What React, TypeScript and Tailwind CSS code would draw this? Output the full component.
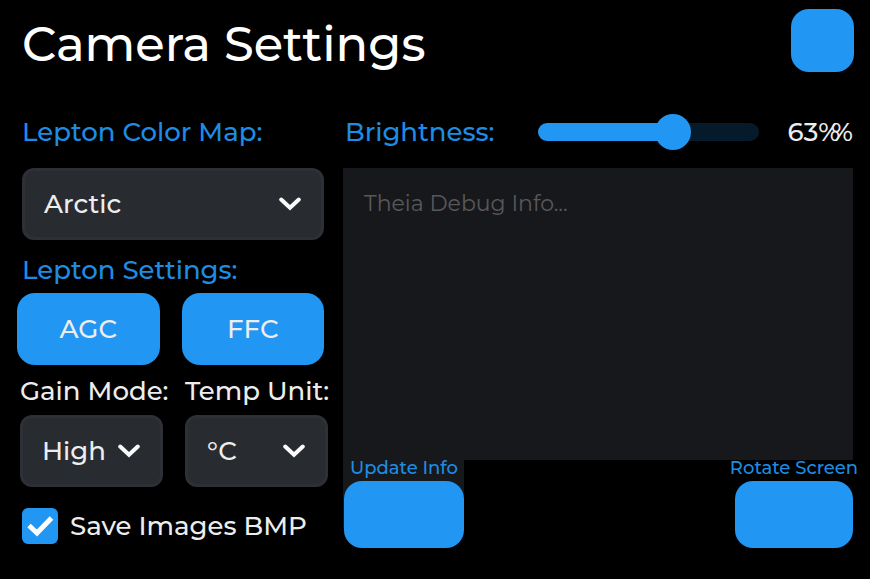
import { useState } from 'react';
import type { CSSProperties } from 'react';

type DropdownProps = { id: string; options: string[]; label?: string };

function Dropdown({ id, options, label }: DropdownProps) {
  return (
    <div className="relative">
      <select
        id={id}
        aria-label={label}
        className="block h-[72px] w-full appearance-none rounded-xl border-[3px] border-[#2d3035] bg-[#282b30] pr-12 pl-[19px] text-[26px] text-[#ededed] outline-none"
      >
        {options.map((option) => (
          <option key={option}>{option}</option>
        ))}
      </select>
      <svg
        viewBox="0 0 22 14"
        className="pointer-events-none absolute top-[29px] right-[23px] h-[14px] w-[22px]"
        fill="none"
        stroke="#fafafa"
        strokeWidth="4"
        strokeLinecap="round"
        strokeLinejoin="miter"
      >
        <path d="M2.2 2.5 11 10.8l8.8-8.3" />
      </svg>
    </div>
  );
}

export default function App() {
  const [brightness, setBrightness] = useState(63);
  const [saveBmp, setSaveBmp] = useState(true);
  const ratio = brightness / 100;
  const fill = { '--fill': `calc(18px + (100% - 36px) * ${ratio})` } as CSSProperties;

  return (
    <div className="min-h-screen bg-black pb-8 font-[Montserrat,Inter,sans-serif] text-[26px] leading-7 font-medium text-[#ededed]">
      <header className="flex items-start justify-between pt-[9px] pr-4 pl-[22px]">
        <h1 className="text-5xl leading-[70px] font-medium text-white">Camera Settings</h1>
        <button type="button" aria-label="Close" className="size-[63px] rounded-[18px] bg-[#2196f3]" />
      </header>

      <main className="mt-[39px] grid grid-cols-[312px_1fr] gap-[14px] px-[17px]">
        <section>
          <div className="pr-[5px] pl-[5px]">
            <label htmlFor="color-map" className="mb-[22px] block text-[#1f8ce3]">
              Lepton Color Map:
            </label>
            <Dropdown id="color-map" options={['Arctic', 'Rainbow', 'Ironblack']} />
            <h2 className="mt-4 font-medium text-[#1f8ce3]">Lepton Settings:</h2>
          </div>
          <div className="mt-[9px] grid grid-cols-2 gap-[22px] pr-[5px]">
            <button type="button" className="h-[72px] rounded-[18px] bg-[#2196f3]">AGC</button>
            <button type="button" className="h-[72px] rounded-[18px] bg-[#2196f3]">FFC</button>
          </div>
          <div className="mt-3 grid grid-cols-2 gap-[22px] pr-px pl-[3px]">
            <div>
              <label htmlFor="gain" className="mb-[10px] block whitespace-nowrap">Gain Mode:</label>
              <Dropdown id="gain" options={['High', 'Low']} />
            </div>
            <div>
              <label htmlFor="unit" className="mb-[10px] block whitespace-nowrap">Temp Unit:</label>
              <Dropdown id="unit" options={['°C', '°F']} />
            </div>
          </div>
          <label className="mt-[21px] flex items-center gap-3 pl-[5px]">
            <span className="relative">
              <input
                type="checkbox"
                checked={saveBmp}
                onChange={(e) => setSaveBmp(e.target.checked)}
                className="peer block size-9 appearance-none rounded-md border-2 border-[#2196f3] checked:bg-[#2196f3]"
              />
              <svg
                viewBox="0 0 36 36"
                className="pointer-events-none absolute inset-0 hidden size-9 peer-checked:block"
                fill="none"
                stroke="#ffffff"
                strokeWidth="5"
              >
                <path d="M7 17.5l8 7.5L29.500 10" />
              </svg>
            </span>
            Save Images BMP
          </label>
        </section>

        <section>
          <div className="mb-[22px] flex h-7 items-center pl-[2px]">
            <label htmlFor="brightness" className="w-[193px] shrink-0 text-[#1f8ce3]">Brightness:</label>
            <input
              id="brightness"
              type="range"
              min="0"
              max="100"
              value={brightness}
              onChange={(e) => setBrightness(Number(e.target.value))}
              style={fill}
              className="h-9 min-w-0 flex-1 appearance-none bg-transparent [&::-webkit-slider-runnable-track]:h-[18px] [&::-webkit-slider-runnable-track]:rounded-full [&::-webkit-slider-runnable-track]:bg-[linear-gradient(to_right,#2196f3_var(--fill),#051b2c_var(--fill))] [&::-webkit-slider-thumb]:-mt-[9px] [&::-webkit-slider-thumb]:size-9 [&::-webkit-slider-thumb]:appearance-none [&::-webkit-slider-thumb]:rounded-full [&::-webkit-slider-thumb]:bg-[#2196f3]"
            />
            <output htmlFor="brightness" className="flex w-[94px] shrink-0 justify-end whitespace-nowrap">
              {brightness}%<span className="-ml-[9px]">%</span>
            </output>
          </div>
          <textarea
            aria-label="Debug info"
            placeholder="Theia Debug Info..."
            className="block h-[292px] w-full resize-none bg-[#17181c] px-[21px] py-[22px] text-[22px] leading-7 font-normal outline-none placeholder:text-[#58585a]"
          />
          <div className="flex justify-between">
            <div className="w-[121px] bg-[linear-gradient(#17181c_68px,transparent_68px)] pl-px text-center">
              <label htmlFor="update" className="mb-[5px] block text-lg leading-4 whitespace-nowrap text-[#1f8ce3]">
                Update Info
              </label>
              <button id="update" type="button" className="block h-[67px] w-full rounded-[18px] bg-[#2196f3]" />
            </div>
            <div className="flex w-[118px] flex-col items-center">
              <label htmlFor="rotate" className="mb-[5px] text-lg leading-4 whitespace-nowrap text-[#1f8ce3]">
                Rotate Screen
              </label>
              <button id="rotate" type="button" className="h-[67px] w-full rounded-[18px] bg-[#2196f3]" />
            </div>
          </div>
        </section>
      </main>
    </div>
  );
}
